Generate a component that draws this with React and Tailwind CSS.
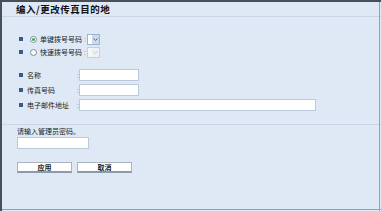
import React from 'react'

const Bullet = () => <span className="inline-block w-[4px] h-[4px] bg-[#3a5a8c] shrink-0" />

const Radio = ({ checked }) => (
  <span className="w-[7px] h-[7px] rounded-full border border-[#7a8a9c] bg-white flex items-center justify-center shrink-0">
    {checked && <span className="w-[3px] h-[3px] rounded-full bg-[#3aa04a]" />}
  </span>
)

const SelectBox = ({ disabled }) => (
  <div className={`w-[13px] h-[11px] border ${disabled ? 'border-[#c6d0db] bg-[#f4f6f8]' : 'border-[#9fb4cc] bg-white'} flex justify-end`}>
    <div className={`w-[7px] h-full flex items-center justify-center ${disabled ? 'bg-[#eef1f4]' : 'bg-[#c9d9ee]'}`}>
      <svg width="5" height="3" viewBox="0 0 5 3">
        <path d="M0.5 0.5 L2.5 2.5 L4.5 0.5" fill="none" stroke={disabled ? '#c0c8d0' : '#4a6a9a'} strokeWidth="1" />
      </svg>
    </div>
  </div>
)

const TextInput = ({ w }) => (
  <div className={`${w} h-[12px] bg-white border border-[#b9c9db]`} />
)

const FieldRow = ({ label }) => (
  <div className="flex items-center h-[12px]">
    <div className="w-[60px] flex items-center gap-[4px] pl-[2px]">
      <Bullet />
      <span>{label}</span>
    </div>
    <span className="w-[2px] text-[#8a96a4]">:</span>
  </div>
)

export default function App() {
  const font = { fontFamily: '"Noto Sans CJK SC", "Noto Sans", sans-serif' }
  return (
    <div className="w-[381px] h-[211px] bg-[#dfe9f5] border-t-[2px] border-l-[2px] border-[#4a4f57] relative overflow-hidden text-[7px] text-[#1a1a1a] leading-none" style={font}>
      <div className="absolute right-[1px] top-0 bottom-0 w-[1px] bg-[#9aa3ad]" />
      <div className="absolute left-0 right-0 bottom-[1px] h-[1px] bg-[#9aa3ad]" />

      <div className="pl-[14px] pt-[3px] h-[14px] font-bold text-[9.5px] tracking-[0.5px] text-[#111]">编入/更改传真目的地</div>
      <div className="h-[1px] bg-[#c9d6e6]" />

      <div className="pl-[15px] pt-[16px] flex flex-col gap-[1px]">
        <div className="flex items-center h-[12px]">
          <div className="pl-[2px] flex items-center">
            <Bullet />
            <span className="ml-[7px]"><Radio checked /></span>
            <span className="ml-[3px]">单键拨号号码</span>
          </div>
          <span className="ml-[2px] text-[#8a96a4]">:</span>
          <span className="ml-[1px]"><SelectBox /></span>
        </div>
        <div className="flex items-center h-[12px]">
          <div className="pl-[2px] flex items-center">
            <Bullet />
            <span className="ml-[7px]"><Radio /></span>
            <span className="ml-[3px]">快速拨号号码</span>
          </div>
          <span className="ml-[2px] text-[#8a96a4]">:</span>
          <span className="ml-[1px]"><SelectBox disabled /></span>
        </div>
      </div>

      <div className="pl-[15px] pt-[11px] flex flex-col gap-[3px]">
        <div className="flex items-center">
          <FieldRow label="名称" />
          <TextInput w="w-[60px]" />
        </div>
        <div className="flex items-center">
          <FieldRow label="传真号码" />
          <TextInput w="w-[60px]" />
        </div>
        <div className="flex items-center">
          <FieldRow label="电子邮件地址" />
          <TextInput w="w-[237px]" />
        </div>
      </div>

      <div className="h-[1px] bg-[#c9d6e6] mt-[13px]" />

      <div className="pl-[15px] pt-[3px]">
        <div>请输入管理员密码。</div>
        <div className="mt-[2px]"><TextInput w="w-[72px]" /></div>
        <div className="flex gap-[5px] mt-[13px]">
          <button className="w-[55px] h-[11px] bg-white border border-[#a9b4c0] border-b-[2px] border-b-[#8e9aa7] font-bold text-[7px] leading-none flex items-center justify-center" style={font}>应用</button>
          <button className="w-[55px] h-[11px] bg-white border border-[#a9b4c0] border-b-[2px] border-b-[#8e9aa7] font-bold text-[7px] leading-none flex items-center justify-center" style={font}>取消</button>
        </div>
      </div>
    </div>
  )
}
